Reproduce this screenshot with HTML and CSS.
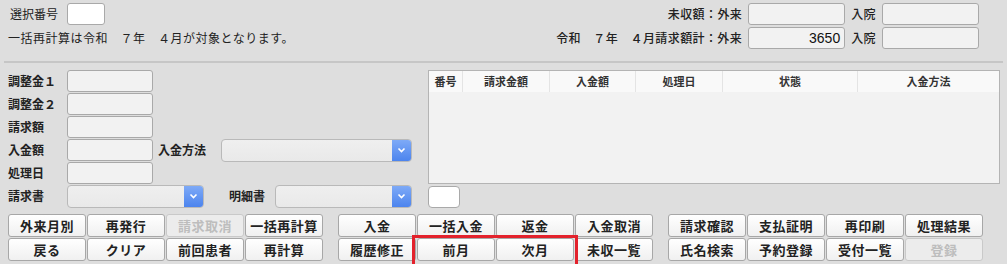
FILE: index.html
```html
<!DOCTYPE html>
<html lang="ja">
<head>
<meta charset="utf-8">
<link rel="stylesheet" href="styles.css">
</head>
<body>
<div class="page">
  <div class="top">
    <div class="top-left">
      <div class="sel-row"><span class="sel-lbl">選択番号</span><span class="inp white w37"></span></div>
      <div class="notice">一括再計算は令和　７年　４月が対象となります。</div>
    </div>
    <div class="top-right">
      <span class="rlbl">未収額：外来</span><span class="inp w97"></span><span class="rlbl">入院</span><span class="inp w97"></span>
      <span class="rlbl">令和　７年　４月請求額計：外来</span><span class="inp w97 num">3650</span><span class="rlbl">入院</span><span class="inp w97"></span>
    </div>
  </div>
  <div class="sep"></div>
  <div class="middle">
    <div class="form">
      <div class="frow"><span class="flbl">調整金１</span><span class="inp w86"></span></div>
      <div class="frow"><span class="flbl">調整金２</span><span class="inp w86"></span></div>
      <div class="frow"><span class="flbl">請求額</span><span class="inp w86"></span></div>
      <div class="frow"><span class="flbl">入金額</span><span class="inp w86"></span><span class="flbl2 method">入金方法</span><span class="select w191"><span class="sbtn"><svg width="9" height="6" viewBox="0 0 9 6"><polyline points="1.5,1.5 4.5,4.5 7.5,1.5" fill="none" stroke="#fff" stroke-width="1.6"/></svg></span></span></div>
      <div class="frow"><span class="flbl">処理日</span><span class="inp w86"></span></div>
      <div class="frow"><span class="flbl">請求書</span><span class="select w137"><span class="sbtn"><svg width="9" height="6" viewBox="0 0 9 6"><polyline points="1.5,1.5 4.5,4.5 7.5,1.5" fill="none" stroke="#fff" stroke-width="1.6"/></svg></span></span><span class="flbl2 meisai">明細書</span><span class="select w137"><span class="sbtn"><svg width="9" height="6" viewBox="0 0 9 6"><polyline points="1.5,1.5 4.5,4.5 7.5,1.5" fill="none" stroke="#fff" stroke-width="1.6"/></svg></span></span></div>
    </div>
    <div class="tablecol">
      <div class="table">
        <div class="thead">
          <span class="th c1">番号</span><span class="th c2">請求金額</span><span class="th c3">入金額</span><span class="th c4">処理日</span><span class="th c5">状態</span><span class="th c6">入金方法</span>
        </div>
      </div>
      <span class="inp white w32 small"></span>
    </div>
  </div>
  <div class="buttons">
    <div class="group">
      <button class="btn">外来月別</button><button class="btn">再発行</button><button class="btn dis">請求取消</button><button class="btn">一括再計算</button>
      <button class="btn">戻る</button><button class="btn">クリア</button><button class="btn">前回患者</button><button class="btn">再計算</button>
    </div>
    <div class="vline"></div>
    <div class="group">
      <button class="btn">入金</button><button class="btn">一括入金</button><button class="btn">返金</button><button class="btn">入金取消</button>
      <button class="btn">履歴修正</button><button class="btn">前月</button><button class="btn">次月</button><button class="btn">未収一覧</button>
    </div>
    <div class="vline"></div>
    <div class="group">
      <button class="btn">請求確認</button><button class="btn">支払証明</button><button class="btn">再印刷</button><button class="btn">処理結果</button>
      <button class="btn">氏名検索</button><button class="btn">予約登録</button><button class="btn">受付一覧</button><button class="btn dis">登録</button>
    </div>
  </div>
  <div class="highlight"></div>
</div>
</body>
</html>
```

FILE: styles.css
```css
* { box-sizing: border-box; }
html, body {
  margin: 0;
  padding: 0;
  background: #dedede;
}
body {
  font-family: "Noto Sans CJK JP", "Noto Sans", sans-serif;
  color: #222;
  font-size: 12px;
  width: 1007px;
  height: 264px;
  overflow: hidden;
}
.page {
  position: relative;
  height: 264px;
}
.top {
  display: flex;
  justify-content: space-between;
  padding: 3px 28px 0 8px;
  height: 61px;
}
.top-left {
  display: flex;
  flex-direction: column;
}
.sel-row {
  display: flex;
  align-items: center;
  height: 22px;
}
.sel-lbl {
  width: 59px;
  padding-left: 2px;
  line-height: 22px;
}
.notice {
  margin-top: 5px;
  line-height: 16px;
  font-size: 12px;
  letter-spacing: 0.5px;
}
.top-right {
  display: grid;
  grid-template-columns: auto 97px auto 97px;
  grid-auto-rows: 22px;
  column-gap: 6px;
  row-gap: 2px;
  align-items: center;
}
.rlbl {
  text-align: right;
  font-weight: 500;
  line-height: 22px;
  letter-spacing: 0.4px;
}
.inp {
  display: inline-block;
  height: 22px;
  background: #f2f2f2;
  border: 1px solid #a9a9a9;
  border-radius: 3px;
}
.inp.white { background: #fff; }
.w37 { width: 38px; }
.w97 { width: 97px; }
.w86 { width: 86px; }
.w32 { width: 32px; }
.num {
  text-align: right;
  padding-right: 4px;
  font-family: "Liberation Sans", "Noto Sans", sans-serif;
  font-size: 14px;
  line-height: 20px;
  color: #111;
}
.sep {
  height: 2px;
  background: #c6c6c6;
  margin: 0 4px 7px 4px;
}
.middle {
  display: flex;
  padding-left: 8px;
  height: 144px;
}
.form {
  width: 420px;
  display: flex;
  flex-direction: column;
  gap: 1px;
}
.frow {
  display: flex;
  align-items: center;
  height: 22px;
}
.flbl {
  width: 59px;
  font-weight: 600;
  line-height: 22px;
}
.flbl2 {
  font-weight: 600;
  line-height: 22px;
}
.method { margin-left: 5px; width: 63px; }
.meisai { margin-left: 25px; width: 46px; }
.select {
  position: relative;
  display: inline-flex;
  justify-content: flex-end;
  height: 23px;
  background: linear-gradient(#efefef, #e9e9e9);
  border: 1px solid #b9b9b9;
  border-radius: 4px;
  overflow: hidden;
}
.w191 { width: 191px; }
.w137 { width: 137px; }
.sbtn {
  width: 19px;
  height: 100%;
  background: linear-gradient(#7eaaf7, #4c84ee);
  display: flex;
  align-items: center;
  justify-content: center;
}
.tablecol {
  display: flex;
  flex-direction: column;
  gap: 2px;
}
.table {
  width: 572px;
  height: 114px;
  background: #f2f2f2;
  border: 1px solid #b4b4b4;
}
.thead {
  display: flex;
  height: 21px;
  background: #f9f9f9;
}
.th {
  font-size: 11px;
  font-weight: 700;
  color: #333;
  text-align: center;
  line-height: 21px;
  border-right: 1px solid #e4e4e4;
}
.th.c6 { border-right: none; }
.c1 { width: 34px; }
.c2 { width: 87px; }
.c3 { width: 86px; }
.c4 { width: 87px; }
.c5 { width: 135px; }
.c6 { flex: 1; }
.small { border-radius: 4px; }
.buttons {
  display: flex;
  padding-left: 8px;
  margin-top: 0;
}
.group {
  display: grid;
  grid-template-columns: repeat(4, 78px);
  grid-auto-rows: 23px;
  column-gap: 1px;
  row-gap: 1px;
}
.vline {
  width: 15px;
}
.btn {
  font-family: "Noto Sans CJK JP", "Noto Sans", sans-serif;
  font-size: 13px;
  font-weight: 700;
  color: #222;
  padding: 0;
  background: linear-gradient(#ffffff, #f0f0f0);
  border: 1px solid #a7a7a7;
  border-radius: 3px;
  line-height: 21px;
  letter-spacing: 0.5px;
}
.btn.dis {
  color: #bdbdbd;
  background: #ececec;
  border-color: #c9c9c9;
}
.highlight {
  position: absolute;
  left: 412px;
  top: 235px;
  width: 166px;
  height: 40px;
  border: 3px solid #e3222c;
}
```
